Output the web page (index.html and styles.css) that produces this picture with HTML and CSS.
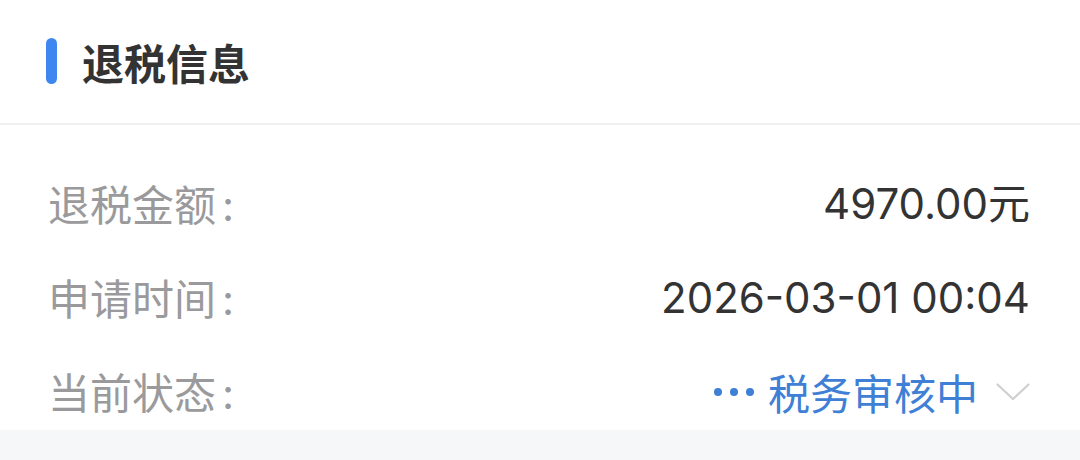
FILE: index.html
```html
<!DOCTYPE html>
<html lang="zh-CN">
<head>
<meta charset="utf-8">
<title>退税信息</title>
<link rel="stylesheet" href="styles.css">
</head>
<body>
<div class="card">
  <div class="header">
    <span class="bar"></span>
    <h1 class="title">退税信息</h1>
  </div>
  <div class="rows">
    <div class="row">
      <span class="label">退税金额<span class="colon">:</span></span>
      <span class="value">4970.00元</span>
    </div>
    <div class="row">
      <span class="label">申请时间<span class="colon">:</span></span>
      <span class="value">2026-03-01 00:04</span>
    </div>
    <div class="row">
      <span class="label">当前状态<span class="colon">:</span></span>
      <span class="status">
        <span class="dots"><i></i><i></i><i></i></span>
        <span class="status-text">税务审核中</span>
        <svg class="chevron" width="34" height="18" viewBox="0 0 34 18"><path d="M1.5 1.5 L17 16 L32.5 1.5" fill="none" stroke="#cfcfd2" stroke-width="2.2" stroke-linecap="round" stroke-linejoin="round"/></svg>
      </span>
    </div>
  </div>
  <div class="band"></div>
</div>
</body>
</html>
```

FILE: styles.css
```css
html, body {
  margin: 0;
  padding: 0;
  background: #ffffff;
}
body {
  width: 1080px;
  height: 460px;
  overflow: hidden;
  font-family: "Noto Sans CJK SC", "Noto Sans", sans-serif;
}
.card {
  display: flex;
  flex-direction: column;
}
.header {
  height: 123px;
  border-bottom: 2px solid #efeff1;
  display: flex;
  align-items: center;
  padding-left: 46px;
}
.bar {
  width: 11px;
  height: 46px;
  border-radius: 6px;
  background: #3f86f1;
  margin-right: 25px;
  margin-top: -2px;
}
.title {
  margin: 0;
  font-size: 42px;
  font-weight: 700;
  color: #333333;
  line-height: 48px;
}
.rows {
  display: flex;
  flex-direction: column;
  gap: 46px;
  padding: 55px 50px 14px 48px;
}
.row {
  display: flex;
  justify-content: space-between;
  align-items: center;
  height: 48px;
  line-height: 48px;
}
.label {
  font-size: 42px;
  color: #9a9a9c;
}
.colon {
  font-family: Inter, "Noto Sans CJK SC", sans-serif;
  margin-left: 6px;
}
.value {
  font-family: Inter, "Noto Sans CJK SC", sans-serif;
  font-size: 42px;
  color: #333333;
}
.status {
  display: flex;
  align-items: center;
}
.dots {
  display: flex;
  gap: 8px;
  margin-right: 14px;
}
.dots i {
  width: 8px;
  height: 8px;
  border-radius: 50%;
  background: #3f7fd6;
}
.status-text {
  font-size: 42px;
  color: #3f7fd6;
  margin-right: 18px;
}
.chevron {
  display: block;
}
.band {
  height: 40px;
  background: #f6f7f9;
}
```
